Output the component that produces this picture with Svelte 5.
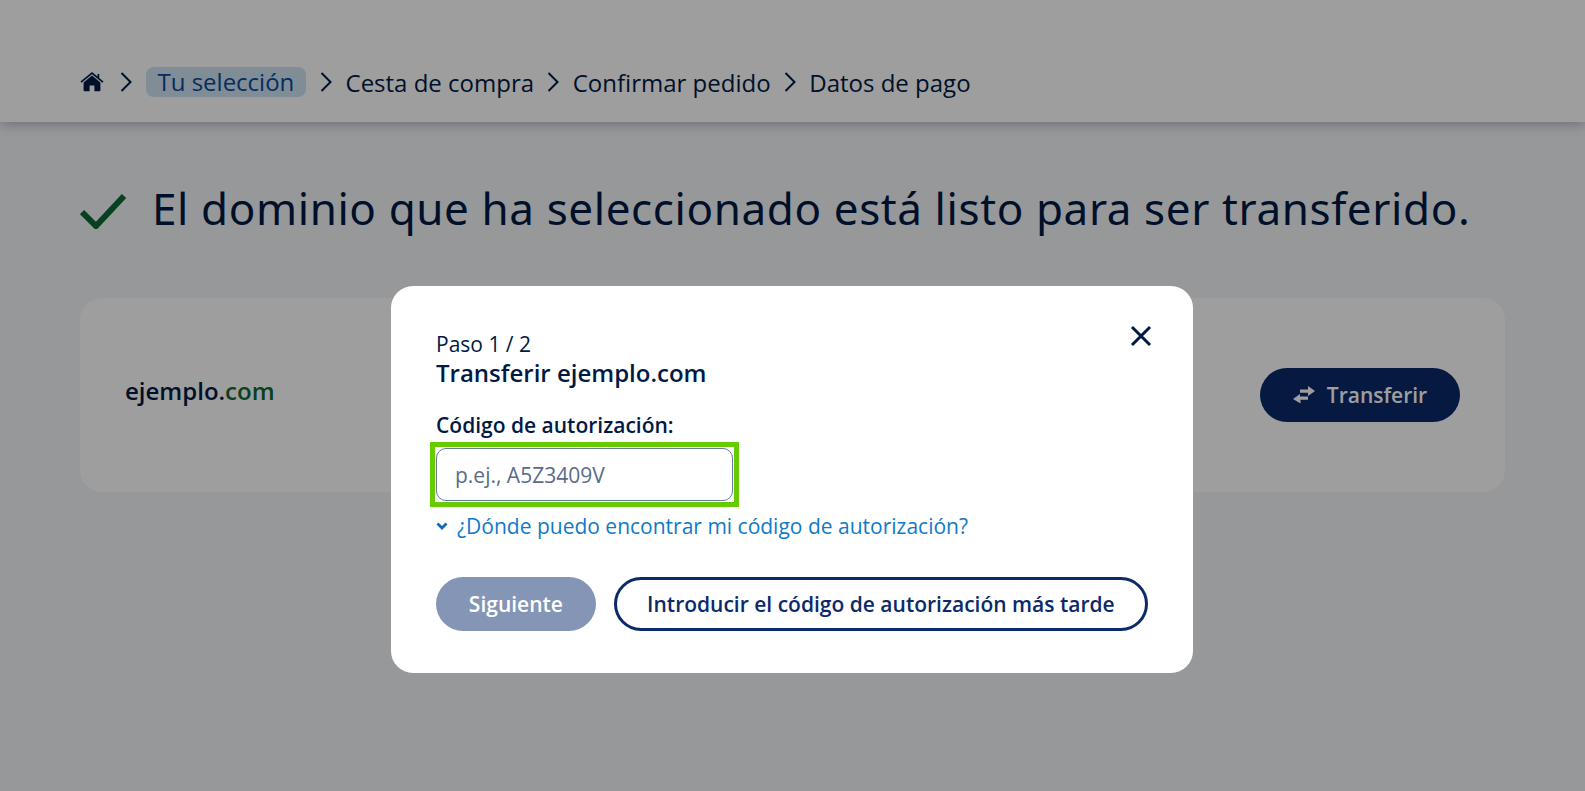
<script>
  const steps = ["Cesta de compra", "Confirmar pedido", "Datos de pago"];
</script>

<div class="page">
  <header class="topbar">
    <nav class="crumbs">
      <svg class="home" viewBox="0 0 24 20" aria-hidden="true">
        <path d="M12 3.6 3.6 10.6V18.2c0 .6.4 1 1 1h5V13.4h4.8v5.8h5c.6 0 1-.4 1-1V10.6z" fill="currentColor" />
        <path d="M1 10.2 12 1.2l11 9M18.4 2v3.6" fill="none" stroke="currentColor" stroke-width="1.7" />
      </svg>
      <svg class="chev" viewBox="0 0 12 20" aria-hidden="true"><path d="M1.5 1 10.5 10 1.5 19" /></svg>
      <span class="current">Tu selección</span>
      {#each steps as step, i}
        <svg class="chev" viewBox="0 0 12 20" aria-hidden="true"><path d="M1.5 1 10.5 10 1.5 19" /></svg>
        <span class="step">{step}</span>
      {/each}
    </nav>
  </header>

  <main class="content">
    <div class="headline">
      <svg class="check" viewBox="0 0 46 36" aria-hidden="true"><path d="M2 19 16 33 44 3" /></svg>
      <h1>El dominio que ha seleccionado está listo para ser transferido.</h1>
    </div>

    <section class="card">
      <span class="domain">ejemplo.<span class="tld">com</span></span>
      <button class="transfer">
        <svg viewBox="0 0 22 18" width="22" height="18" aria-hidden="true">
          <path d="M7 3.5h8V0l7 5-7 5V6.8H7zM15 10.5v3.2H7.5V17.5L0 13l7-5v2.5z" fill="currentColor" />
        </svg>
        Transferir
      </button>
    </section>
  </main>
</div>

<div class="overlay"></div>

<div class="modal-wrap">
  <div class="modal">
    <button class="close" aria-label="Cerrar">
      <svg viewBox="0 0 22 22" width="22" height="22"><path d="M2 2 20 20M20 2 2 20" /></svg>
    </button>
    <p class="step-no">Paso 1 / 2</p>
    <h2>Transferir ejemplo.com</h2>
    <label for="auth">Código de autorización:</label>
    <div class="highlight">
      <input id="auth" placeholder="p.ej., A5Z3409V" />
    </div>
    <a class="help" href="#auth">
      <svg viewBox="0 0 12 8" width="12" height="8" aria-hidden="true"><path d="M1.5 1.5 6 6l4.5-4.5" /></svg>
      ¿Dónde puedo encontrar mi código de autorización?
    </a>
    <div class="actions">
      <button class="next">Siguiente</button>
      <button class="later">Introducir el código de autorización más tarde</button>
    </div>
  </div>
</div>

<style>
  :global(body) {
    margin: 0;
    background: #f4f5f8;
    font-family: "Open Sans", "Noto Sans", sans-serif;
    color: #001a45;
    overflow: hidden;
  }

  .page {
    height: 791px;
  }

  .topbar {
    height: 122px;
    background: #fff;
    box-shadow: 0 2px 12px rgba(10, 20, 60, 0.3);
    box-sizing: border-box;
    padding: 67px 80px 0;
  }

  .crumbs {
    display: flex;
    align-items: center;
    height: 30px;
    font-size: 24px;
  }

  .home {
    width: 24px;
    height: 20px;
    color: #001a45;
    margin-right: 16px;
  }

  .chev {
    width: 12px;
    height: 20px;
    flex: none;
  }

  .chev path {
    fill: none;
    stroke: #001a45;
    stroke-width: 2;
  }

  .current {
    margin: 0 14px;
    padding: 0 11.5px;
    height: 30px;
    line-height: 30px;
    border-radius: 8px;
    background: #cfe2f3;
    color: #0a4a96;
  }

  .step {
    margin: 0 13px 0 13.7px;
  }

  .content {
    padding: 61px 80px 0;
  }

  .headline {
    display: flex;
    align-items: center;
    gap: 26px;
    height: 50px;
  }

  .check {
    width: 46px;
    height: 36px;
    flex: none;
    margin-top: 6px;
  }

  .check path {
    fill: none;
    stroke: #0c6a38;
    stroke-width: 6;
  }

  h1 {
    margin: 0;
    font-size: 44px;
    font-weight: 400;
    white-space: nowrap;
    font-family: "Noto Sans", sans-serif;
    letter-spacing: 0.6px;
  }

  .card {
    margin-top: 65px;
    height: 194px;
    box-sizing: border-box;
    background: #fff;
    border-radius: 22px;
    padding: 0 45px;
    display: flex;
    align-items: center;
    justify-content: space-between;
  }

  .domain {
    font-size: 24px;
    font-weight: 600;
    padding-bottom: 10px;
  }

  .tld {
    color: #0c6a38;
  }

  .transfer {
    width: 200px;
    height: 54px;
    border: 0;
    border-radius: 27px;
    background: #0a2a6a;
    color: #fff;
    font: 600 21px "Open Sans", sans-serif;
    display: flex;
    align-items: center;
    justify-content: center;
    gap: 12px;
  }

  .overlay {
    position: fixed;
    inset: 0;
    background: rgba(0, 0, 0, 0.38);
  }

  .modal-wrap {
    position: fixed;
    inset: 0;
    display: flex;
    justify-content: center;
    padding-top: 286px;
    padding-right: 1px;
  }

  .modal {
    position: relative;
    width: 802px;
    height: 387px;
    box-sizing: border-box;
    background: #fff;
    border-radius: 22px;
    padding: 45px 45px 0;
  }

  .close {
    position: absolute;
    top: 39px;
    right: 41px;
    padding: 0;
    border: 0;
    background: none;
    line-height: 0;
  }

  .close path {
    fill: none;
    stroke: #001a45;
    stroke-width: 3;
  }

  .step-no {
    margin: 0;
    font-size: 21px;
    line-height: 26px;
  }

  h2 {
    margin: 0;
    font-size: 24px;
    font-weight: 600;
    line-height: 32px;
  }

  label {
    display: block;
    margin-top: 21px;
    font-size: 21px;
    font-weight: 600;
    line-height: 30px;
  }

  .highlight {
    width: 297px;
    height: 53px;
    margin-top: 8px;
    outline: 5px solid #66cc00;
    outline-offset: 1px;
  }

  input {
    width: 100%;
    height: 100%;
    box-sizing: border-box;
    border: 1px solid #6a7a9a;
    border-radius: 10px;
    padding: 0 18px;
    font: 400 21px "Open Sans", sans-serif;
    outline: none;
  }

  input::placeholder {
    color: #5a6b8a;
    opacity: 1;
  }

  .help {
    display: flex;
    align-items: center;
    gap: 9px;
    margin-top: 10px;
    font-size: 21px;
    line-height: 30px;
    color: #0f7ac8;
    text-decoration: none;
  }

  .help path {
    fill: none;
    stroke: #0f6ab8;
    stroke-width: 2.8;
  }

  .actions {
    display: flex;
    gap: 18px;
    margin-top: 36px;
  }

  .actions button {
    height: 54px;
    border-radius: 28px;
    font: 600 21px "Open Sans", sans-serif;
    white-space: nowrap;
  }

  .next {
    width: 160px;
    border: 0;
    background: #8595b5;
    color: #fff;
  }

  .later {
    width: 535px;
    border: 3px solid #0a2a6a;
    background: #fff;
    color: #0a2a6a;
  }
</style>
